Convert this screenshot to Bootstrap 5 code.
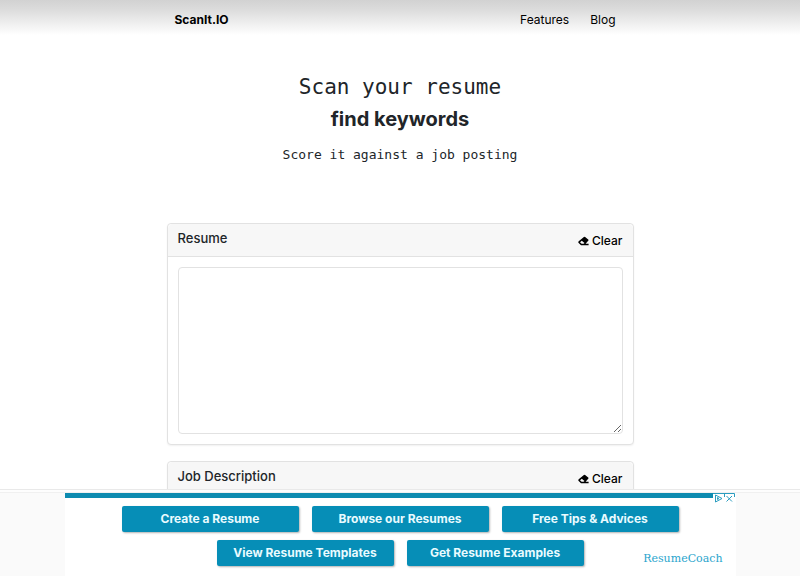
<!DOCTYPE html>
<html lang="en">
<head>
<meta charset="utf-8">
<meta name="viewport" content="width=device-width, initial-scale=1">
<title>ScanIt.IO</title>
<link href="https://cdn.jsdelivr.net/npm/bootstrap@5.3.0/dist/css/bootstrap.min.css" rel="stylesheet">
<style>
  html { scrollbar-width: none; }
  html::-webkit-scrollbar { display: none; }
  body { font-family: Inter, "Liberation Sans", sans-serif; font-size: 12px; line-height: 18px; color: #212529; }
  .site-header { height: 39px; background: linear-gradient(#d2d2d2, #dcdcdc 25%, #fff 90%); }
  .page-column { max-width: 467px; }
  .site-header a { color: #000; text-decoration: none; }
  .site-links { gap: 21px; padding-right: 10px; }
  .hero-mono { font-family: "DejaVu Sans Mono", monospace; }
  .hero-title { font-size: 21px; line-height: 32px; }
  .hero-title strong { font-family: Inter, "Liberation Sans", sans-serif; font-size: 20px; }
  .hero-note { font-size: 13px; line-height: 20px; padding: 2px 0; }
  .scan-card { border-color: #e2e2e2; border-radius: 4px; box-shadow: 0 1px 2px rgba(0, 0, 0, .06); }
  .scan-card .card-header { height: 33px; padding: 0 10px; background: #f7f7f7; border-color: #e2e2e2; }
  .scan-card .card-body { padding: 10px; }
  .scan-card label { font-size: 13px; font-weight: 500; line-height: 28px; }
  .scan-card textarea { height: 167px; font-size: 12px; border-color: #e2e2e2; border-radius: 4px; }
  .clear-btn { font-size: 12px; line-height: 18px; font-weight: 500; color: #000; padding: 8px 0 0; border: 0; gap: 3px; }
  .ad-dock { background: #fafafa; border-top: 1px solid #e9e9e9; height: 87px; }
  .ad-strip { height: 3px; background: #fdfdfd; border-bottom: 1px solid #f0f0f0; }
  .ad-panel { max-width: 671px; background: #fff; border-top: 5px solid #0d8bb0; padding-top: 8px; }
  .ad-btn { width: 177px; height: 26px; padding: 0; font: 700 12px/26px Inter, sans-serif; color: #e9fbff; background: #068eb7; border: 0; border-radius: 2px; box-shadow: 1px 1px 2px rgba(0, 0, 0, .3); }
  .ad-btn:hover { background: #057b9f; color: #fff; }
  .ad-row { gap: 13px; }
  .ad-brand { right: 13px; bottom: 8px; font: 11px/18px "DejaVu Serif", serif; color: #2aa5cd; text-decoration: none; }
  .ad-choices { top: -5px; right: 0; background: #fff; }
</style>
</head>
<body>
<header class="site-header">
  <nav class="page-column mx-auto h-100 d-flex align-items-center justify-content-between px-2" aria-label="Main">
    <a href="#" class="fw-bold">ScanIt.IO</a>
    <div class="site-links d-flex">
      <a href="#features">Features</a>
      <a href="#blog">Blog</a>
    </div>
  </nav>
</header>

<main class="page-column mx-auto">
  <section class="text-center pt-4 pb-5 mb-2">
    <h1 class="hero-title hero-mono fw-normal mt-2 mb-2">Scan your resume<br><strong>find keywords</strong></h1>
    <p class="hero-note hero-mono mb-0">Score it against a job posting</p>
  </section>
  <section class="card scan-card mb-3">
    <div class="card-header d-flex justify-content-between align-items-start">
      <label for="resume">Resume</label>
      <button type="button" class="btn clear-btn d-flex align-items-center">
        <svg width="11" height="10" viewBox="0 0 11 10" aria-hidden="true"><path d="M.7 5.3 5.9 1Q6.5.5 7.1 1L10.2 3.5Q10.8 4.1 10.2 4.8L7.6 7.8H10.6V9.2H3L.7 7Q-.1 6.2.7 5.3ZM3.6 7.8H5.6L6.5 6.9 3.8 4.7 2 6.2Z" fill="currentColor" fill-rule="evenodd"/></svg>
        Clear
      </button>
    </div>
    <div class="card-body"><textarea id="resume" class="form-control d-block"></textarea></div>
  </section>
  <section class="card scan-card mb-5">
    <div class="card-header d-flex justify-content-between align-items-start">
      <label for="job">Job Description</label>
      <button type="button" class="btn clear-btn d-flex align-items-center">
        <svg width="11" height="10" viewBox="0 0 11 10" aria-hidden="true"><path d="M.7 5.3 5.9 1Q6.5.5 7.1 1L10.2 3.5Q10.8 4.1 10.2 4.8L7.6 7.8H10.6V9.2H3L.7 7Q-.1 6.2.7 5.3ZM3.6 7.8H5.6L6.5 6.9 3.8 4.7 2 6.2Z" fill="currentColor" fill-rule="evenodd"/></svg>
        Clear
      </button>
    </div>
    <div class="card-body"><textarea id="job" class="form-control d-block"></textarea></div>
  </section>
</main>

<aside class="ad-dock fixed-bottom d-flex flex-column" aria-label="Advertisement">
  <div class="ad-strip"></div>
  <div class="flex-grow-1 d-flex">
    <div class="ad-panel position-relative w-100 mx-auto d-flex flex-column gap-2">
      <div class="ad-row d-flex justify-content-center">
        <button type="button" class="btn ad-btn">Create a Resume</button>
        <button type="button" class="btn ad-btn">Browse our Resumes</button>
        <button type="button" class="btn ad-btn">Free Tips &amp; Advices</button>
      </div>
      <div class="ad-row d-flex justify-content-center">
        <button type="button" class="btn ad-btn">View Resume Templates</button>
        <button type="button" class="btn ad-btn">Get Resume Examples</button>
      </div>
      <a href="#coach" class="ad-brand position-absolute">ResumeCoach</a>
      <button type="button" class="ad-choices position-absolute border-0 p-0 d-flex" aria-label="Ad options">
        <svg width="23" height="10" viewBox="0 0 23 10" fill="none" stroke="#2a9dc0" stroke-width="1"><path d="M0 .5H21.5V4M11.5 0V4M2.5 2V9L9 5.5ZM4.5 4.5V6.5L6 5.5ZM13.5 3 19 8.5M19 3 13.5 8.5"/></svg>
      </button>
    </div>
  </div>
</aside>
<script src="https://cdn.jsdelivr.net/npm/bootstrap@5.3.0/dist/js/bootstrap.bundle.min.js"></script>
</body>
</html>
